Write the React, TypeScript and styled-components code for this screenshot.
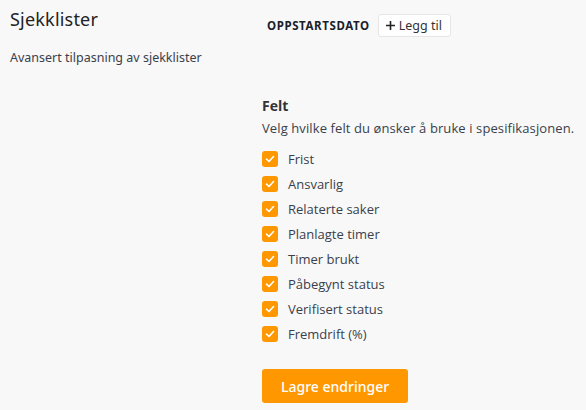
import * as React from "react";
import styled, { createGlobalStyle } from "styled-components";

const GlobalStyle = createGlobalStyle`
  html, body {
    margin: 0;
    padding: 0;
    background: #f8f8f8;
  }
  body {
    font-family: "Open Sans", "Noto Sans", sans-serif;
    color: #333;
  }
`;

const Page = styled.div`
  display: grid;
  grid-template-columns: 252px 1fr;
  padding: 0 0 0 10px;
  min-height: 410px;
  box-sizing: border-box;
`;

const Aside = styled.div`
  display: flex;
  flex-direction: column;
  padding-top: 7px;
`;

const Title = styled.h2`
  margin: 0;
  font-family: "Noto Sans", sans-serif;
  font-weight: 400;
  font-size: 18px;
  line-height: 24px;
  color: #222;
  letter-spacing: 0.2px;
`;

const Subtitle = styled.p`
  margin: 18px 0 0;
  font-family: "Noto Sans", sans-serif;
  font-size: 12.5px;
  line-height: 18px;
  color: #3a3f4b;
`;

const Main = styled.div`
  display: flex;
  flex-direction: column;
  padding-top: 14px;
`;

const DateRow = styled.div`
  display: flex;
  align-items: center;
  gap: 8px;
  padding-left: 5px;
`;

const DateLabel = styled.span`
  font-family: "Noto Sans", sans-serif;
  font-weight: 700;
  font-size: 11.5px;
  color: #1a1f2b;
  letter-spacing: 0.6px;
`;

const AddButton = styled.button`
  display: inline-flex;
  align-items: center;
  gap: 3px;
  height: 23px;
  padding: 0 8px 0 6px;
  background: #fff;
  border: 1px solid #e6e6e6;
  border-radius: 3px;
  font-family: "Noto Sans", sans-serif;
  font-size: 12.5px;
  color: #333;
  cursor: pointer;
`;

const Section = styled.section`
  margin-top: 59px;
  display: flex;
  flex-direction: column;
`;

const SectionTitle = styled.h3`
  margin: 0;
  font-size: 14px;
  font-weight: 700;
  line-height: 20px;
  color: #333;
`;

const SectionText = styled.p`
  margin: 3px 0 0;
  font-size: 13px;
  line-height: 18px;
  letter-spacing: 0.1px;
  color: #3a3f4b;
`;

const FieldList = styled.div`
  display: flex;
  flex-direction: column;
  margin-top: 9px;
`;

const FieldRow = styled.label`
  display: flex;
  align-items: center;
  gap: 10px;
  height: 25px;
  font-size: 13px;
  color: #3a3f4b;
  cursor: pointer;
`;

const Box = styled.span<{ $checked: boolean }>`
  width: 16px;
  height: 16px;
  border-radius: 3px;
  background: ${({ $checked }) => ($checked ? "#ff9800" : "#fff")};
  border: ${({ $checked }) => ($checked ? "none" : "1px solid #ccc")};
  display: flex;
  align-items: center;
  justify-content: center;
  flex-shrink: 0;
`;

const SaveButton = styled.button`
  align-self: flex-start;
  margin-top: 23px;
  height: 34px;
  padding: 0 19px;
  background: #ff9800;
  border: none;
  border-radius: 3px;
  color: #fff;
  font-family: "Noto Sans", sans-serif;
  font-size: 14px;
  font-weight: 500;
  cursor: pointer;
`;

const fields = [
  "Frist",
  "Ansvarlig",
  "Relaterte saker",
  "Planlagte timer",
  "Timer brukt",
  "Påbegynt status",
  "Verifisert status",
  "Fremdrift (%)",
];

const Check = () => (
  <svg width="10" height="10" viewBox="0 0 10 10" fill="none">
    <path d="M1.5 5.2 L4 7.5 L8.5 2.5" stroke="#fff" strokeWidth="1.6" strokeLinecap="round" strokeLinejoin="round" />
  </svg>
);

export default function App() {
  const [checked, setChecked] = React.useState<boolean[]>(fields.map(() => true));

  const toggle = (i: number) =>
    setChecked((prev) => prev.map((v, j) => (j === i ? !v : v)));

  return (
    <>
      <GlobalStyle />
      <Page>
        <Aside>
          <Title>Sjekklister</Title>
          <Subtitle>Avansert tilpasning av sjekklister</Subtitle>
        </Aside>
        <Main>
          <DateRow>
            <DateLabel>OPPSTARTSDATO</DateLabel>
            <AddButton>
              <svg width="11" height="11" viewBox="0 0 11 11">
                <path d="M5.5 1v9M1 5.5h9" stroke="#222" strokeWidth="1.6" />
              </svg>
              Legg til
            </AddButton>
          </DateRow>
          <Section>
            <SectionTitle>Felt</SectionTitle>
            <SectionText>Velg hvilke felt du ønsker å bruke i spesifikasjonen.</SectionText>
            <FieldList>
              {fields.map((f, i) => (
                <FieldRow key={f} onClick={() => toggle(i)}>
                  <Box $checked={checked[i]}>{checked[i] && <Check />}</Box>
                  {f}
                </FieldRow>
              ))}
            </FieldList>
            <SaveButton>Lagre endringer</SaveButton>
          </Section>
        </Main>
      </Page>
    </>
  );
}
